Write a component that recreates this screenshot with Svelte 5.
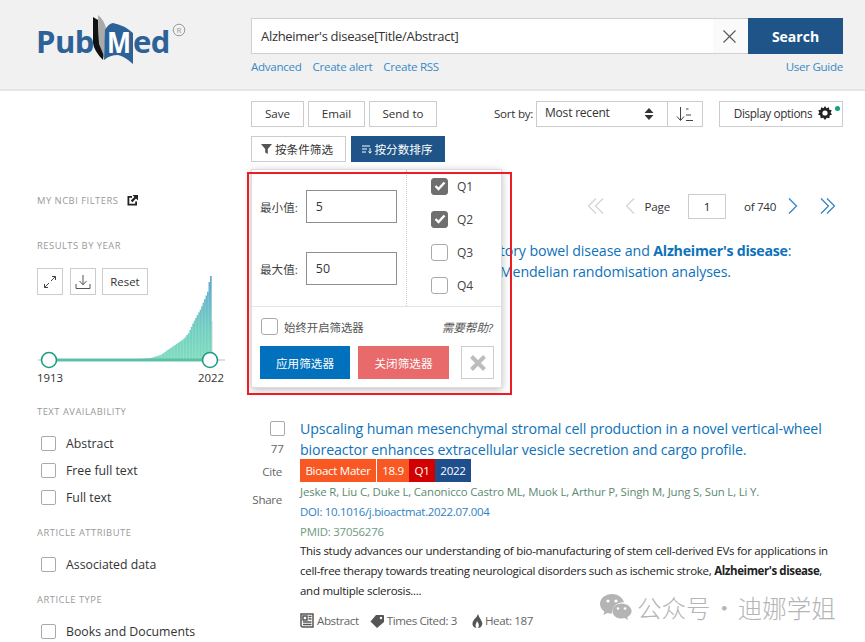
<script lang="ts">
  // year histogram, anchors read off the chart: [x, height]
  const anchors = [[49, 0], [140, 0], [150, 1], [160, 4], [170, 11], [183, 20], [188, 26], [193, 37], [200, 50], [207, 67], [209, 80], [210, 83]];

  function heightAt(x: number) {
    for (let i = 1; i < anchors.length; i++) {
      const [x0, h0] = anchors[i - 1];
      const [x1, h1] = anchors[i];
      if (x <= x1) return h0 + ((h1 - h0) * (x - x0)) / (x1 - x0);
    }
    return 0;
  }

  const bars = Array.from({ length: 110 }, (_, i) => {
    const x = 49 + (i * 161) / 109;
    return { x: x - 37, h: heightAt(x) };
  });

  const availability = ['Abstract', 'Free full text', 'Full text'];
  const quartiles = [
    { name: 'Q1', on: true },
    { name: 'Q2', on: true },
    { name: 'Q3', on: false },
    { name: 'Q4', on: false }
  ];
</script>

<div class="page">
  <header class="masthead">
    <div class="logo-col">
      <svg class="logo" width="170" height="60" viewBox="30 10 170 60">
        <path d="M93 17 L93 43 Q94 51 103 60 L104 52 L99 42 L98 20 Z" fill="#111" />
        <path d="M98 15 Q104 20 106 28 L104 56 L99 44 Z" fill="#a9a9a9" />
        <path d="M105 30 Q108 24 113 23 Q124 25 133 33 L133 64 Q124 56 118 55 Q110 55 104 60 Z" fill="#2c6297" />
        <text x="36" y="53" class="logo-text">Pub</text>
        <text x="107" y="53" class="logo-m" textLength="24" lengthAdjust="spacingAndGlyphs">M</text>
        <text x="133" y="53" class="logo-text">ed</text>
        <circle cx="179" cy="30" r="5.8" fill="none" stroke="#999" stroke-width="1" />
        <text x="179" y="33" class="logo-r">R</text>
      </svg>
    </div>
    <div class="search-col">
      <div class="search-row">
        <div class="search-input">Alzheimer's disease[Title/Abstract]</div>
        <div class="search-clear">
          <svg width="13" height="13" viewBox="0 0 13 13"><path d="M0.5 0.5 L12.5 12.5 M12.5 0.5 L0.5 12.5" stroke="#555" stroke-width="1.1" fill="none" /></svg>
        </div>
        <button class="search-btn">Search</button>
      </div>
      <div class="search-links">
        <a href="#a">Advanced</a>
        <a href="#b">Create alert</a>
        <a href="#c">Create RSS</a>
        <a href="#d" class="guide">User Guide</a>
      </div>
    </div>
  </header>

  <div class="body">
    <aside class="sidebar">
      <div class="side-head ncbi">
        MY NCBI FILTERS
        <svg width="11" height="11" viewBox="0 0 11 11"><path d="M0.5 1 H5 V2.8 H2.3 V8.7 H8.2 V6.5 H10 V10.5 H0.5 Z M5.5 0 H11 V5.5 L9 3.6 L5.4 7.2 L3.8 5.6 L7.4 2 Z" fill="#222" /></svg>
      </div>
      <div class="side-head year">RESULTS BY YEAR</div>
      <div class="chart">
        <svg class="hist" width="190" height="110" viewBox="0 0 190 110">
          <defs>
            <linearGradient id="barfill" gradientUnits="userSpaceOnUse" x1="0" y1="5" x2="0" y2="88">
              <stop offset="0" stop-color="#63a4d2" />
              <stop offset="0.65" stop-color="#72cfc0" />
              <stop offset="1" stop-color="#7fdcbe" />
            </linearGradient>
          </defs>
          <rect x="174" y="50" width="1.7" height="38" fill="#e2e2e2" />
          {#each bars as b}
            <rect x={b.x} y={88 - b.h} width="1.7" height={b.h} fill="url(#barfill)" />
          {/each}
          <path d="M1 89 H188" stroke="#ddd" stroke-width="2" />
          <path d="M12 89 H173" stroke="#5dbfa5" stroke-width="3" />
          <circle cx="12" cy="89" r="7.5" fill="#fff" stroke="#1f9d84" stroke-width="1.6" />
          <circle cx="173" cy="89" r="7.5" fill="#fff" stroke="#1f9d84" stroke-width="1.6" />
        </svg>
        <div class="chart-tools">
          <button class="tool" aria-label="expand">
            <svg width="14" height="14" viewBox="0 0 14 14"><path d="M8 6 L12.5 1.5 M9 1.5 H12.5 V5 M6 8 L1.5 12.5 M5 12.5 H1.5 V9" stroke="#444" stroke-width="1" fill="none" /></svg>
          </button>
          <button class="tool" aria-label="download">
            <svg width="16" height="16" viewBox="0 0 16 16"><path d="M8 1 V10.5 M4.5 7 L8 10.8 L11.5 7 M1 10 V14.5 H15 V10" stroke="#555" stroke-width="1" fill="none" /></svg>
          </button>
          <button class="tool reset">Reset</button>
        </div>
        <div class="chart-years"><span>1913</span><span>2022</span></div>
      </div>

      <div class="side-head sec">TEXT AVAILABILITY</div>
      <ul class="filters">
        {#each availability as item}
          <li><span class="box"></span>{item}</li>
        {/each}
      </ul>
      <div class="side-head sec">ARTICLE ATTRIBUTE</div>
      <ul class="filters">
        <li><span class="box"></span>Associated data</li>
      </ul>
      <div class="side-head sec">ARTICLE TYPE</div>
      <ul class="filters">
        <li><span class="box"></span>Books and Documents</li>
      </ul>
    </aside>

    <main class="results">
      <div class="toolbar">
        <button class="btn save">Save</button>
        <button class="btn email">Email</button>
        <button class="btn send">Send to</button>
        <span class="sort-label">Sort by:</span>
        <div class="sort-select">
          <span>Most recent</span>
          <svg width="10" height="12" viewBox="0 0 10 12"><path d="M5 0 L9.5 5 H0.5 Z M5 12 L0.5 7 H9.5 Z" fill="#333" /></svg>
        </div>
        <div class="sort-order">
          <svg width="18" height="16" viewBox="0 0 18 16"><path d="M4.5 1 V14 M1 10.5 L4.5 14.5 L8 10.5 M10 14.5 H17 M10 9 H15 M10 3 H12.5" stroke="#444" stroke-width="1" fill="none" /></svg>
        </div>
        <button class="btn display">
          Display options
          <svg width="14" height="14" viewBox="0 0 14 14">
            <path d="M7 0 L8.5 2.2 L11 1.2 L11.2 3.8 L13.8 4.2 L12.6 6.5 L14 8.5 L11.6 9.6 L11.4 12.2 L8.8 11.8 L7 14 L5.2 11.8 L2.6 12.2 L2.4 9.6 L0 8.5 L1.4 6.5 L0.2 4.2 L2.8 3.8 L3 1.2 L5.5 2.2 Z" fill="#222" />
            <circle cx="7" cy="7" r="2.6" fill="#fff" />
          </svg>
          <span class="dot"></span>
        </button>
      </div>
      <div class="toolbar second">
        <button class="btn filter">
          <svg width="11" height="10" viewBox="0 0 11 10"><path d="M0 0 H11 L6.8 5 V10 L4.2 8.5 V5 Z" fill="#555" /></svg>
          按条件筛选
        </button>
        <button class="btn score">
          <svg width="10" height="10" viewBox="0 0 10 10"><path d="M0 2 H8 M0 5 H5 M0 8 H4 M8 4 V9 M6.5 7.5 L8 9.2 L9.5 7.5" stroke="#fff" stroke-width="1" fill="none" /></svg>
          按分数排序
        </button>
      </div>

      <div class="pager">
        <svg class="chev" width="18" height="18" viewBox="0 0 18 18"><path d="M9 1.5 L1.5 9 L9 16.5 M16 1.5 L8.5 9 L16 16.5" stroke="#d3d3d3" stroke-width="1.2" fill="none" /></svg>
        <svg class="chev prev" width="10" height="18" viewBox="0 0 10 18"><path d="M9 1.5 L1.5 9 L9 16.5" stroke="#d3d3d3" stroke-width="1.2" fill="none" /></svg>
        <span class="page-label">Page</span>
        <span class="page-input">1</span>
        <span class="page-of">of 740</span>
        <svg class="chev next" width="10" height="18" viewBox="0 0 10 18"><path d="M1 1.5 L8.5 9 L1 16.5" stroke="#2f80c2" stroke-width="1.2" fill="none" /></svg>
        <svg class="chev last" width="16" height="18" viewBox="0 0 16 18"><path d="M1 1.5 L8.5 9 L1 16.5 M7 1.5 L14.5 9 L7 16.5" stroke="#2f80c2" stroke-width="1.2" fill="none" /></svg>
      </div>

      <article class="first">
        <a href="#r1" class="title">Association between inflammatory bowel disease and <b>Alzheimer's disease</b>:<br />Evidence from big two-sample Mendelian randomisation analyses.</a>
      </article>

      <article class="item">
        <div class="item-side">
          <span class="box big"></span>
          <span class="num">77</span>
          <span class="act cite">Cite</span>
          <span class="act share">Share</span>
        </div>
        <div class="item-main">
          <a href="#r2" class="title">Upscaling human mesenchymal stromal cell production in a novel vertical-wheel bioreactor enhances extracellular vesicle secretion and cargo profile.</a>
          <div class="badges">
            <span class="badge mater">Bioact Mater</span>
            <span class="badge factor">18.9</span>
            <span class="badge q">Q1</span>
            <span class="badge yr">2022</span>
          </div>
          <div class="line authors">Jeske R, Liu C, Duke L, Canonicco Castro ML, Muok L, Arthur P, Singh M, Jung S, Sun L, Li Y.</div>
          <div class="line doi">DOI: 10.1016/j.bioactmat.2022.07.004</div>
          <div class="line pmid">PMID: 37056276</div>
          <p class="snippet">This study advances our understanding of bio-manufacturing of stem cell-derived EVs for applications in cell-free therapy towards treating neurological disorders such as ischemic stroke, <b>Alzheimer's disease</b>, and multiple sclerosis....</p>
          <div class="meta">
            <span class="m-abs">
              <svg width="15" height="15" viewBox="0 0 15 15"><path d="M1 1 H13 V14 H3 Q1 14 1 12 Z M3 3 V7 H7 V3 Z M8.5 3.5 H11.5 M8.5 6 H11.5 M3 9 H11.5 M3 11.5 H11.5" fill="none" stroke="#555" stroke-width="1.5" /></svg>
              Abstract
            </span>
            <span class="m-tag">
              <svg width="15" height="14" viewBox="0 0 15 14"><path d="M6 1 H13 Q14 1 14 2 V8 L7 14 L0.5 7.5 Z" fill="#555" /><circle cx="11" cy="4" r="1.2" fill="#fff" /></svg>
              Times Cited: 3
            </span>
            <span class="m-heat">
              <svg width="11" height="14" viewBox="0 0 11 14"><path d="M6 0 Q7 3 9 6 Q11 9 10 11 Q9 14 6 14 Q7.5 12 6.5 9.5 Q5.5 8 5 7 Q4 10 3.5 11 Q3.5 12.5 4.5 14 Q1 13.5 0.5 10.5 Q0 8 2.5 5 Q5 3 6 0 Z" fill="#555" /></svg>
              Heat: 187
            </span>
          </div>
        </div>
      </article>

      <div class="popup">
        <div class="pop-top">
          <div class="pop-range">
            <div class="range"><span>最小值:</span><span class="num-input">5</span></div>
            <div class="range"><span>最大值:</span><span class="num-input">50</span></div>
          </div>
          <div class="pop-q">
            {#each quartiles as q}
              <div class="q-row">
                <span class="box q-box" class:checked={q.on}>
                  {#if q.on}
                    <svg width="12" height="10" viewBox="0 0 12 10"><path d="M1.5 5 L4.5 8 L10.5 1.5" stroke="#fff" stroke-width="2.4" fill="none" /></svg>
                  {/if}
                </span>
                {q.name}
              </div>
            {/each}
          </div>
        </div>
        <div class="pop-foot">
          <div class="always">
            <span class="box q-box"></span>
            <span class="always-text">始终开启筛选器</span>
            <em>需要帮助?</em>
          </div>
          <div class="pop-btns">
            <button class="apply">应用筛选器</button>
            <button class="close">关闭筛选器</button>
            <button class="cross" aria-label="close">
              <svg width="18" height="18" viewBox="0 0 18 18"><path d="M2.5 2.5 L15.5 15.5 M15.5 2.5 L2.5 15.5" stroke="#bdbdbd" stroke-width="4" fill="none" /></svg>
            </button>
          </div>
        </div>
      </div>
      <div class="red-frame"></div>
    </main>
  </div>

  <div class="watermark">
    <svg width="32" height="27" viewBox="0 0 32 27">
      <path d="M12 0 C5.5 0 0 4.3 0 10 C0 13.2 1.8 15.8 4.4 17.6 L3.4 21 L7.4 18.9 C9 19.4 10.6 19.6 12.2 19.6 C11.8 12 18 8 24 8.4 C22.6 3.4 17.6 0 12 0 Z" fill="#b4b4b4" />
      <path d="M21.5 9.6 C16 9.6 12.6 13.4 12.6 17.2 C12.6 21.4 16.4 24.6 21.5 24.6 C22.6 24.6 23.6 24.4 24.6 24.1 L28 26 L27.2 23 C29.8 21.6 31.6 19.6 31.6 17.2 C31.6 13.2 27 9.6 21.5 9.6 Z" fill="#b4b4b4" />
      <circle cx="8" cy="7" r="1.6" fill="#fff" /><circle cx="16" cy="7" r="1.6" fill="#fff" />
      <circle cx="18" cy="14.5" r="1.3" fill="#fff" /><circle cx="25" cy="14.5" r="1.3" fill="#fff" />
    </svg>
    <span>公众号 · 迪娜学姐</span>
  </div>
</div>

<style>
  :global(body) {
    margin: 0;
    background: #fff;
  }

  .page {
    position: relative;
    width: 865px;
    height: 642px;
    overflow: hidden;
    font-family: 'Open Sans', 'Noto Sans CJK SC', sans-serif;
    color: #333;
    font-size: 12px;
  }

  button {
    font-family: inherit;
    cursor: pointer;
  }

  a {
    text-decoration: none;
  }

  .masthead {
    display: flex;
    height: 89px;
    background: #f1f1f1;
    border-bottom: 2px solid #e6e6e6;
  }

  .logo-col {
    width: 251px;
    flex: none;
  }

  .logo {
    display: block;
    margin: 10px 0 0 30px;
  }

  .logo-text {
    font: bold 31px 'Open Sans', sans-serif;
    fill: #2c6297;
    letter-spacing: -0.5px;
  }

  .logo-m {
    font: bold 29px 'Open Sans', sans-serif;
    fill: #fff;
  }

  .logo-r {
    font: 8px 'Open Sans', sans-serif;
    fill: #999;
    text-anchor: middle;
  }

  .search-col {
    width: 592px;
    padding-top: 18px;
  }

  .search-row {
    display: flex;
    height: 36px;
  }

  .search-input {
    flex: 1;
    background: #fff;
    border: 1px solid #d0d0d0;
    border-right: none;
    padding-left: 9px;
    line-height: 35px;
    font-size: 13px;
    letter-spacing: -0.3px;
    color: #333;
  }

  .search-clear {
    box-sizing: border-box;
    width: 35px;
    padding-right: 3px;
    background: #fafafa;
    display: flex;
    align-items: center;
    justify-content: center;
    border-top: 1px solid #d0d0d0;
    border-bottom: 1px solid #d0d0d0;
  }

  .search-btn {
    width: 95px;
    background: #1f5488;
    color: #fff;
    border: none;
    font-weight: 700;
    font-size: 14px;
  }

  .search-links {
    display: flex;
    gap: 11px;
    margin-top: 5px;
    font-size: 11.6px;
    letter-spacing: -0.3px;
  }

  .search-links a {
    color: #3a8ac4;
  }

  .search-links .guide {
    margin-left: auto;
  }

  .body {
    display: flex;
  }

  .sidebar {
    width: 251px;
    flex: none;
    padding: 103px 0 0 37px;
    box-sizing: border-box;
  }

  .side-head {
    font-size: 9.4px;
    letter-spacing: 0.5px;
    color: #999;
    line-height: 13px;
  }

  .ncbi {
    display: flex;
    align-items: center;
    gap: 9px;
  }

  .year {
    margin-top: 32px;
  }

  .chart {
    position: relative;
    height: 118px;
    margin-top: 16px;
  }

  .hist {
    position: absolute;
    left: 0;
    top: 3px;
  }

  .chart-tools {
    position: relative;
    display: flex;
    gap: 6.5px;
  }

  .tool {
    width: 26px;
    height: 27px;
    padding: 0;
    background: #fff;
    border: 1px solid #ccc;
    display: flex;
    align-items: center;
    justify-content: center;
    color: #333;
    font-size: 11.4px;
  }

  .tool.reset {
    width: 46px;
  }

  .chart-years {
    position: relative;
    display: flex;
    justify-content: space-between;
    width: 187px;
    margin-top: 75px;
    font-size: 11.4px;
    line-height: 16px;
  }

  .chart + .sec {
    margin-top: 19px;
  }

  .filters {
    list-style: none;
    margin: 0;
    padding: 11.5px 0 15.5px 4px;
  }

  .filters li {
    display: flex;
    align-items: center;
    gap: 10px;
    height: 27px;
    font-size: 12.3px;
    color: #333;
  }

  .box {
    display: inline-flex;
    align-items: center;
    justify-content: center;
    box-sizing: border-box;
    width: 15px;
    height: 15px;
    flex: none;
    background: #fff;
    border: 1.5px solid #aaa;
    border-radius: 2px;
  }

  .results {
    position: relative;
    width: 592px;
    padding-top: 10px;
  }

  .toolbar {
    display: flex;
    align-items: center;
    height: 26px;
  }

  .toolbar.second {
    margin-top: 9px;
    gap: 5px;
  }

  .btn {
    height: 26px;
    padding: 0 0 2px;
    background: #fff;
    border: 1px solid #ccc;
    color: #333;
    font-size: 11.6px;
    display: inline-flex;
    align-items: center;
    justify-content: center;
  }

  .save {
    width: 53px;
  }

  .email {
    width: 57px;
    margin-left: 4px;
  }

  .send {
    width: 68px;
    margin-left: 4px;
  }

  .sort-label {
    margin-left: 57px;
    width: 42px;
    font-size: 11.6px;
    letter-spacing: -0.25px;
    padding-bottom: 2px;
  }

  .sort-select {
    box-sizing: border-box;
    width: 132px;
    height: 26px;
    border: 1px solid #ccc;
    display: flex;
    align-items: center;
    justify-content: space-between;
    padding: 0 13px 0 8px;
    font-size: 12px;
    letter-spacing: -0.2px;
  }

  .sort-select span {
    padding-bottom: 3px;
  }

  .sort-order {
    box-sizing: border-box;
    width: 35px;
    height: 26px;
    border: 1px solid #ccc;
    border-left: none;
    display: flex;
    align-items: center;
    justify-content: center;
  }

  .display {
    position: relative;
    width: 124px;
    margin-left: auto;
    gap: 6px;
    padding-left: 4px;
    font-size: 11.8px;
    letter-spacing: -0.4px;
  }

  .dot {
    position: absolute;
    top: 4px;
    right: 2px;
    width: 5px;
    height: 5px;
    border-radius: 50%;
    background: #12a37e;
  }

  .filter {
    width: 95px;
    gap: 3px;
    padding: 0 3px 0 0;
  }

  .score {
    width: 94px;
    gap: 3px;
    padding: 0 2px 0 0;
    background: #1f5488;
    border-color: #1f5488;
    color: #fff;
  }

  .pager {
    display: flex;
    align-items: center;
    justify-content: flex-end;
    height: 26px;
    margin-top: 31px;
    padding-right: 7px;
    font-size: 11.6px;
  }

  .chev.prev {
    margin-left: 20px;
  }

  .page-label {
    margin-left: 10px;
    letter-spacing: -0.2px;
  }

  .page-input {
    box-sizing: border-box;
    width: 38px;
    height: 25px;
    margin-left: 18px;
    border: 1px solid #ccc;
    text-align: center;
    line-height: 24px;
    color: #222;
  }

  .page-of {
    margin-left: 18px;
    letter-spacing: -0.3px;
  }

  .chev.next {
    margin-left: 12px;
  }

  .chev.last {
    margin-left: 22px;
  }

  .first {
    margin-top: 21px;
    padding-left: 49px;
    height: 178px;
  }

  .title {
    display: block;
    color: #0d72b9;
    font-size: 14.2px;
    line-height: 21px;
    letter-spacing: -0.1px;
  }

  .first .title {
    white-space: nowrap;
  }

  .first b {
    letter-spacing: -0.25px;
  }

  .item {
    display: flex;
    gap: 15px;
  }

  .item-side {
    width: 34px;
    flex: none;
    display: flex;
    flex-direction: column;
    align-items: flex-end;
    color: #666;
    font-size: 11.6px;
    line-height: 16px;
    letter-spacing: -0.3px;
  }

  .box.big {
    width: 15px;
    height: 15px;
    margin-top: 3px;
  }

  .num {
    margin-top: 5px;
    margin-right: 1.5px;
  }

  .act {
    margin-top: 7px;
    margin-right: 3px;
  }

  .share {
    margin-top: 12px;
    white-space: nowrap;
  }

  .item-main {
    width: 543px;
  }

  .badges {
    display: flex;
    height: 23px;
    margin-top: -1px;
    color: #fff;
    font-size: 11.6px;
    line-height: 23px;
    letter-spacing: -0.3px;
  }

  .badge {
    text-align: center;
  }

  .mater {
    width: 76px;
    margin-right: 1px;
    background: #f95822;
  }

  .factor {
    width: 32px;
    background: #f95822;
  }

  .q {
    width: 26px;
    background: #d20000;
  }

  .yr {
    width: 36px;
    background: #1f4e8c;
  }

  .line {
    font-size: 11.4px;
    line-height: 20px;
    white-space: nowrap;
  }

  .authors {
    color: #5b8a72;
    letter-spacing: -0.15px;
  }

  .doi {
    color: #2f7fc1;
    letter-spacing: -0.28px;
  }

  .pmid {
    color: #6f9a7f;
    letter-spacing: -0.2px;
  }

  .snippet {
    margin: -1px 0 0;
    color: #222;
    font-size: 11.5px;
    line-height: 20px;
    letter-spacing: -0.27px;
  }

  .snippet b {
    letter-spacing: -0.4px;
  }

  .meta {
    display: flex;
    align-items: center;
    margin-top: 12px;
    color: #666;
    font-size: 11.6px;
    letter-spacing: -0.4px;
  }

  .meta span {
    display: inline-flex;
    align-items: center;
    gap: 2px;
  }

  .m-tag {
    margin-left: 11px;
  }

  .m-heat {
    margin-left: 15px;
  }

  .popup {
    position: absolute;
    left: 0;
    top: 78px;
    width: 251px;
    height: 219px;
    box-sizing: border-box;
    background: #fff;
    border: 1px solid #ddd;
    box-shadow: 0 2px 8px rgba(0, 0, 0, 0.25);
  }

  .pop-top {
    display: flex;
    height: 136px;
    border-bottom: 1px solid #e4e4e4;
  }

  .pop-range {
    width: 155px;
    box-sizing: border-box;
    border-right: 1px dotted #ccc;
    padding: 20px 0 0 8px;
    display: flex;
    flex-direction: column;
    gap: 29px;
  }

  .range {
    display: flex;
    align-items: center;
    gap: 8px;
    font-size: 11.6px;
    color: #444;
  }

  .num-input {
    box-sizing: border-box;
    width: 91px;
    height: 33px;
    border: 1px solid #8f8f8f;
    padding-left: 9px;
    line-height: 31px;
    font-size: 12.4px;
    color: #333;
  }

  .pop-q {
    padding: 8px 0 0 24px;
    display: flex;
    flex-direction: column;
    gap: 17px;
  }

  .q-row {
    display: flex;
    align-items: center;
    gap: 9px;
    height: 16px;
    font-size: 12px;
    color: #444;
  }

  .q-box {
    width: 17px;
    height: 17px;
    border-radius: 3px;
  }

  .q-box.checked {
    background: #6f6f6f;
    border-color: #6f6f6f;
  }

  .pop-foot {
    padding: 11px 7px 0 8px;
  }

  .always {
    display: flex;
    align-items: center;
    gap: 6px;
    height: 17px;
    padding-left: 1px;
    font-size: 11.4px;
    color: #555;
  }

  .always em {
    margin-left: auto;
    padding-right: 1px;
    font-size: 11.6px;
    color: #555;
  }

  .pop-btns {
    display: flex;
    gap: 8px;
    margin-top: 11px;
  }

  .pop-btns button {
    height: 33px;
    padding: 0;
    border: none;
    color: #fff;
    font-size: 11.6px;
  }

  .apply {
    width: 90px;
    background: #0271bd;
  }

  .close {
    width: 91px;
    background: #e86a6a;
  }

  .pop-btns .cross {
    width: 33px;
    margin-left: 4px;
    background: #fff;
    border: 1px solid #ccc;
    display: flex;
    align-items: center;
    justify-content: center;
  }

  .red-frame {
    position: absolute;
    left: -4px;
    top: 81px;
    width: 261px;
    height: 219px;
    border: 2px solid #ee1c25;
    pointer-events: none;
  }

  .watermark {
    position: absolute;
    left: 600px;
    top: 594px;
    display: flex;
    align-items: center;
    gap: 5px;
    color: #b5b5b5;
    font-size: 24.5px;
    word-spacing: -4px;
    line-height: 27px;
    white-space: nowrap;
    font-family: 'Noto Sans CJK SC', sans-serif;
    font-weight: 300;
  }
</style>
